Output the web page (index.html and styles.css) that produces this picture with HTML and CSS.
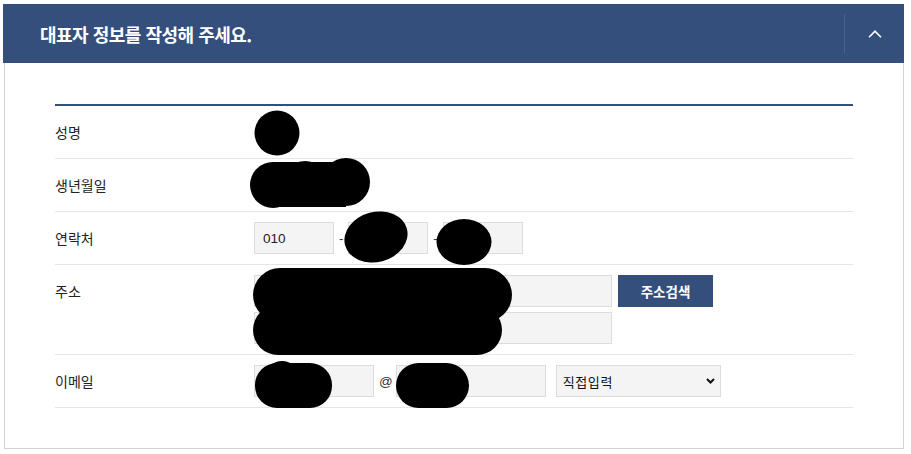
FILE: index.html
```html
<!DOCTYPE html>
<html lang="ko">
<head>
<meta charset="utf-8">
<title>대표자 정보</title>
<link rel="stylesheet" href="styles.css">
</head>
<body>
<section class="panel">
  <div class="panel-head">
    <h2 class="panel-title">대표자 정보를 작성해 주세요.</h2>
    <button class="toggle" type="button" aria-label="접기">
      <svg width="14" height="8" viewBox="0 0 14 8"><path d="M1 7.2 L7 1.2 L13 7.2" fill="none" stroke="#fff" stroke-width="1.6"/></svg>
    </button>
  </div>
  <div class="panel-body">
    <div class="form">
      <div class="row">
        <div class="label">성명</div>
        <div class="field"></div>
      </div>
      <div class="row">
        <div class="label">생년월일</div>
        <div class="field"></div>
      </div>
      <div class="row">
        <div class="label">연락처</div>
        <div class="field">
          <input class="inp inp-phone" type="text" value="010">
          <span class="sep">-</span>
          <input class="inp inp-phone" type="text">
          <span class="sep">-</span>
          <input class="inp inp-phone" type="text">
        </div>
      </div>
      <div class="row">
        <div class="label">주소</div>
        <div class="field field-col">
          <div class="line">
            <input class="inp inp-addr" type="text">
            <button class="btn-search" type="button">주소검색</button>
          </div>
          <div class="line">
            <input class="inp inp-addr" type="text">
          </div>
        </div>
      </div>
      <div class="row">
        <div class="label">이메일</div>
        <div class="field">
          <input class="inp inp-mail" type="text">
          <span class="at">@</span>
          <input class="inp inp-domain" type="text">
          <div class="select-wrap">
            <select class="sel">
              <option>직접입력</option>
            </select>
            <svg class="sel-arrow" width="9" height="6" viewBox="0 0 9 6"><path d="M1 1 L4.5 4.5 L8 1" fill="none" stroke="#111" stroke-width="2"/></svg>
          </div>
        </div>
      </div>
    </div>
  </div>
</section>
<svg class="redact" width="911" height="454" viewBox="0 0 911 454" aria-hidden="true">
  <g fill="#000">
    <circle cx="277" cy="133" r="22.5"/>
    <circle cx="273" cy="185" r="23"/>
    <circle cx="305" cy="184" r="23"/>
    <circle cx="346" cy="182" r="24"/>
    <rect x="273" y="162" width="73" height="45"/>
    <ellipse cx="376" cy="237" rx="32" ry="25" transform="rotate(-15 376 237)"/>
    <ellipse cx="464" cy="242" rx="27.5" ry="23"/>
    <rect x="253" y="268" width="259" height="54" rx="27"/>
    <rect x="253" y="305" width="249" height="50" rx="25"/>
    <rect x="255" y="363" width="77" height="45" rx="22"/>
    <circle cx="282" cy="378" r="17"/>
    <rect x="396" y="363" width="73" height="45" rx="22.5"/>
  </g>
</svg>
</body>
</html>
```

FILE: styles.css
```css
* { box-sizing: border-box; }

html, body {
  margin: 0;
  padding: 0;
  background: #fff;
}

body {
  position: relative;
  width: 911px;
  height: 454px;
  overflow: hidden;
  font-family: "Noto Sans CJK KR", "Noto Sans", sans-serif;
  color: #333;
}

.panel {
  padding-top: 4px;
}

.panel-head {
  margin-left: 3px;
  width: 901px;
  height: 59px;
  background: #354f7c;
  display: flex;
  align-items: center;
  justify-content: space-between;
}

.panel-title {
  margin: 0;
  padding-left: 37px;
  font-size: 18px;
  font-weight: 700;
  letter-spacing: -0.5px;
  color: #fff;
  line-height: 1;
}

.toggle {
  width: 60px;
  height: 39px;
  border: 0;
  border-left: 1px solid #4a6291;
  background: transparent;
  padding: 0;
  display: flex;
  align-items: center;
  justify-content: center;
}

.toggle svg { display: block; }

.panel-body {
  margin-left: 4px;
  width: 900px;
  border: 1px solid #d4d4d4;
  border-top: 0;
  padding: 41px 50px 40px;
}

.form {
  border-top: 2px solid #354f7c;
}

.row {
  display: grid;
  grid-template-columns: 199px 1fr;
  padding: 10px 0;
  border-bottom: 1px solid #e6e6e6;
  min-height: 53px;
}

.label {
  font-size: 14px;
  line-height: 32px;
  color: #222;
}

.field {
  display: flex;
  align-items: center;
  height: 32px;
}

.field-col {
  flex-direction: column;
  align-items: flex-start;
  height: auto;
  gap: 5px;
}

.line {
  display: flex;
  align-items: center;
}

.inp {
  height: 32px;
  border: 1px solid #dcdcdc;
  background: #f4f4f4;
  padding: 0 8px;
  font-family: "Liberation Sans", "Noto Sans CJK KR", sans-serif;
  font-size: 13.5px;
  color: #222;
  outline: none;
}

.inp-phone { width: 80px; }
.inp-addr { width: 358px; }
.inp-mail { width: 120px; }
.inp-domain { width: 150px; }

.sep {
  margin: 0 5px;
  font-family: "Liberation Sans", sans-serif;
  font-size: 13px;
  color: #333;
}

.at {
  margin: 0 3px 0 5px;
  font-family: "Liberation Sans", sans-serif;
  font-size: 13.5px;
  color: #333;
}

.btn-search {
  margin-left: 6px;
  width: 95px;
  height: 32px;
  border: 0;
  background: #354f7c;
  color: #fff;
  font-family: "Noto Sans CJK KR", sans-serif;
  font-size: 13.5px;
  font-weight: 700;
  padding: 0;
}

.select-wrap {
  position: relative;
  margin-left: 10px;
}

.sel {
  -webkit-appearance: none;
  appearance: none;
  width: 165px;
  height: 32px;
  border: 1px solid #dcdcdc;
  background: #f4f4f4;
  padding: 0 6px;
  font-family: "Noto Sans CJK KR", sans-serif;
  font-size: 13px;
  letter-spacing: 0.6px;
  color: #111;
  outline: none;
  border-radius: 0;
}

.sel-arrow {
  position: absolute;
  right: 6px;
  top: 13px;
  pointer-events: none;
}

.redact {
  position: absolute;
  left: 0;
  top: 0;
  pointer-events: none;
}
```
